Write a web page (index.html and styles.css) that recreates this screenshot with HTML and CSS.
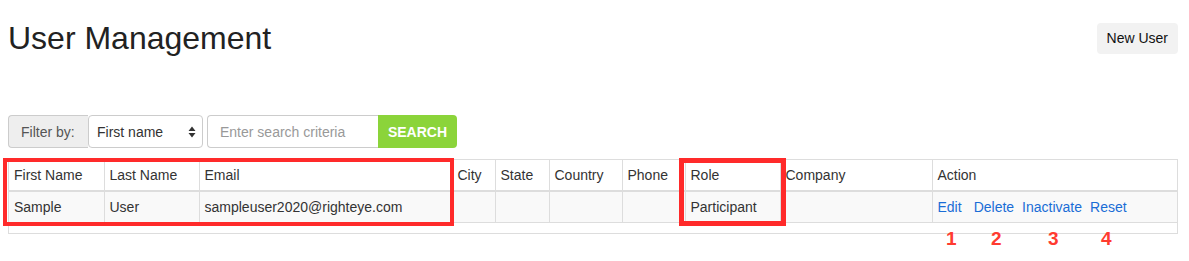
FILE: index.html
```html
<!DOCTYPE html>
<html lang="en">
<head>
  <meta charset="UTF-8" />
  <meta name="viewport" content="width=device-width, initial-scale=1.0"/>
  <title>User Management</title>
  <link rel="stylesheet" href="styles.css">
</head>
<body>
  <div class="page">
    <!-- Page header -->
    <header class="top">
      <h1>User Management</h1>
      <button class="btn-new">New User</button>
    </header>

    <!-- Filter bar -->
    <form class="filter" onsubmit="return false">
      <span class="addon">Filter by:</span>
      <label class="select-box">
        <select>
          <option>First name</option>
          <option>Last name</option>
          <option>Email</option>
        </select>
        <svg width="8" height="12" viewBox="0 0 8 12"><path d="M4 0.5 L7.5 5 H0.5 Z M4 11.5 L0.5 7 H7.5 Z" fill="#333"/></svg>
      </label>
      <div class="search">
        <input type="text" placeholder="Enter search criteria" />
        <button class="btn-search">SEARCH</button>
      </div>
    </form>

    <!-- Users table -->
    <div class="table-wrap">
      <table>
        <colgroup>
          <col class="c-first"><col class="c-last"><col class="c-email"><col class="c-city">
          <col class="c-state"><col class="c-country"><col class="c-phone"><col class="c-role">
          <col class="c-company"><col>
        </colgroup>
        <thead>
          <tr>
            <th>First Name</th><th>Last Name</th><th>Email</th><th>City</th><th>State</th>
            <th>Country</th><th>Phone</th><th>Role</th><th>Company</th><th>Action</th>
          </tr>
        </thead>
        <tbody>
          <tr>
            <td>Sample</td><td>User</td><td>sampleuser2020@righteye.com</td><td></td><td></td>
            <td></td><td></td><td>Participant</td><td></td>
            <td>
              <div class="actions">
                <a href="#" class="act act-edit">Edit</a>
                <a href="#" class="act">Delete</a>
                <a href="#" class="act">Inactivate</a>
                <a href="#" class="act">Reset</a>
              </div>
            </td>
          </tr>
        </tbody>
      </table>
      <!-- annotation boxes -->
      <div class="mark mark-name"></div>
      <div class="mark mark-role"></div>
    </div>

    <!-- annotation numbers under the action links -->
    <div class="nums">
      <span class="num n1">1</span>
      <span class="num n2">2</span>
      <span class="num n3">3</span>
      <span class="num n4">4</span>
    </div>
  </div>
</body>
</html>
```
FILE: styles.css
```css
body {
  margin: 0;
  font-family: "Liberation Sans", Arial, sans-serif;
  font-size: 14px;
  color: #333;
}
.page {
  padding: 0 11px 14px 8px;
}
.top {
  display: flex;
  justify-content: space-between;
  align-items: center;
  padding-top: 21px;
}
h1 {
  margin: 0;
  font-size: 32px;
  font-weight: normal;
  line-height: 1.1;
  color: #222;
}
.btn-new {
  background: #f2f2f2;
  border: none;
  border-radius: 4px;
  padding: 6px 10px;
  font: inherit;
  line-height: 19px;
  color: #111;
  cursor: pointer;
}
.filter {
  display: flex;
  margin-top: 59px;
  height: 33px;
}
.addon {
  box-sizing: border-box;
  width: 80px;
  display: flex;
  align-items: center;
  padding: 0 12px;
  background: #eee;
  border: 1px solid #ccc;
  border-right: none;
  border-radius: 4px 0 0 4px;
  color: #555;
}
.select-box {
  box-sizing: border-box;
  width: 115px;
  display: flex;
  align-items: center;
  padding: 0 6px 0 8px;
  background: white;
  border: 1px solid #ccc;
  border-radius: 4px;
}
.select-box select {
  appearance: none;
  -webkit-appearance: none;
  flex: 1;
  border: none;
  background: transparent;
  padding: 0;
  font: inherit;
  color: #333;
  outline: none;
}
.search {
  display: flex;
  margin-left: 4px;
}
.search input {
  box-sizing: border-box;
  width: 171px;
  border: 1px solid #ccc;
  border-right: none;
  border-radius: 4px 0 0 4px;
  padding: 0 12px;
  font: inherit;
  color: #333;
  outline: none;
}
.search input::placeholder {
  color: #999;
}
.btn-search {
  width: 79px;
  background: #8bd43a;
  color: white;
  font: inherit;
  font-weight: bold;
  border: none;
  border-radius: 0 4px 4px 0;
  cursor: pointer;
}
.table-wrap {
  position: relative;
  margin-top: 11px;
  border: 1px solid #ddd;
  padding-bottom: 10px;
}
table {
  width: 100%;
  border-collapse: collapse;
  table-layout: fixed;
}
th, td {
  padding: 5px;
  line-height: 20px;
  text-align: left;
  font-weight: normal;
  white-space: nowrap;
  border-left: 1px solid #ddd;
}
th:first-child, td:first-child {
  border-left: none;
}
thead th {
  border-bottom: 2px solid #ddd;
}
tbody td {
  border-bottom: 1px solid #ddd;
  background: #f9f9f9;
}
.c-first { width: 95px; }
.c-last { width: 95px; }
.c-email { width: 253px; }
.c-city { width: 43px; }
.c-state { width: 54px; }
.c-country { width: 73px; }
.c-phone { width: 63px; }
.c-role { width: 95px; }
.c-company { width: 152px; }
.actions {
  display: flex;
  gap: 8px;
}
.act {
  color: #1a6dd6;
  text-decoration: none;
}
.act-edit {
  margin-right: 4px;
}
.nums {
  position: relative;
  height: 14px;
}
.num {
  position: absolute;
  top: -5px;
  font-size: 19px;
  font-weight: bold;
  line-height: 19px;
  color: #ff3b30;
}
.n1 { left: 938px; }
.n2 { left: 983px; }
.n3 { left: 1040px; }
.n4 { left: 1093px; }
.mark {
  position: absolute;
  box-sizing: border-box;
  border: 4px solid #ff2a2a;
  pointer-events: none;
}
.mark-name {
  left: -6px;
  top: -2px;
  width: 451px;
  height: 68px;
}
.mark-role {
  left: 670px;
  top: -2px;
  width: 107px;
  height: 68px;
  border-width: 5px;
}
```
